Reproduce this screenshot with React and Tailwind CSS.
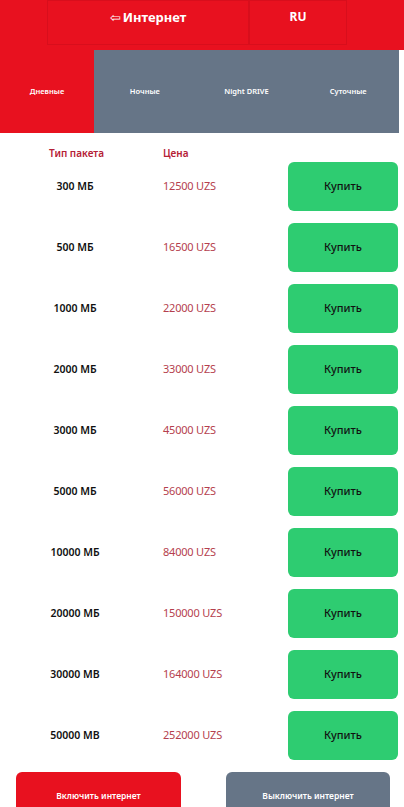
import React from "react";

const packages = [
  { size: "300 МБ", price: "12500 UZS" },
  { size: "500 МБ", price: "16500 UZS" },
  { size: "1000 МБ", price: "22000 UZS" },
  { size: "2000 МБ", price: "33000 UZS" },
  { size: "3000 МБ", price: "45000 UZS" },
  { size: "5000 МБ", price: "56000 UZS" },
  { size: "10000 МБ", price: "84000 UZS" },
  { size: "20000 МБ", price: "150000 UZS" },
  { size: "30000 MB", price: "164000 UZS" },
  { size: "50000 MB", price: "252000 UZS" },
];

const tabs = ["Ночные", "Night DRIVE", "Суточные"];

const App = () => {
  return (
    <div className="w-[404px] h-[807px] overflow-hidden bg-white font-['Noto_Sans',sans-serif]">
      {/* top bar */}
      <header className="h-[50px] bg-[#e8111f] flex items-start pl-[47px]">
        <div className="w-[202px] h-[45px] border border-[#d80e1c] flex items-start justify-center pt-[7px] text-white text-[13px] font-bold">
          <span className="text-[13px] mr-[2px] font-normal">⇦</span>
          Интернет
        </div>
        <div className="w-[98px] h-[45px] border border-[#d80e1c] flex items-start justify-center pt-[7px] text-white text-[12px] font-bold">
          RU
        </div>
      </header>

      {/* tabs */}
      <nav className="flex h-[83px] w-[399px]">
        <div className="w-[94px] bg-[#e8111f] flex items-center justify-center text-white text-[7.5px] font-semibold">
          Дневные
        </div>
        {tabs.map((t) => (
          <div
            key={t}
            className="flex-1 bg-[#667587] flex items-center justify-center text-white text-[7.5px] font-semibold"
          >
            {t}
          </div>
        ))}
      </nav>

      {/* table head */}
      <div className="flex items-end pb-[1px] h-[29px] text-[10px] font-semibold text-[#b52036]">
        <span className="pl-[49px] w-[163px]">Тип пакета</span>
        <span>Цена</span>
      </div>

      {/* rows */}
      <div className="flex flex-col gap-[12px]">
        {packages.map((p) => (
          <div key={p.size} className="flex items-center h-[49px]">
            <span className="w-[150px] text-center text-[10.5px] font-semibold text-[#111]">
              {p.size}
            </span>
            <span className="ml-[13px] w-[125px] text-[11px] text-[#b53f4e] tracking-[-0.2px]">
              {p.price}
            </span>
            <button className="w-[110px] h-[49px] rounded-[6px] bg-[#2ecc71] text-[11px] font-medium text-[#111]">
              Купить
            </button>
          </div>
        ))}
      </div>

      {/* bottom actions */}
      <div className="flex justify-between pl-[16px] pr-[14px] mt-[12px]">
        <button className="w-[165px] h-[48px] rounded-[6px] bg-[#e8111f] text-white text-[8.5px] font-semibold">
          Включить интернет
        </button>
        <button className="w-[164px] h-[48px] rounded-[6px] bg-[#667587] text-white text-[8.5px] font-semibold">
          Выключить интернет
        </button>
      </div>
    </div>
  );
};

export default App;
